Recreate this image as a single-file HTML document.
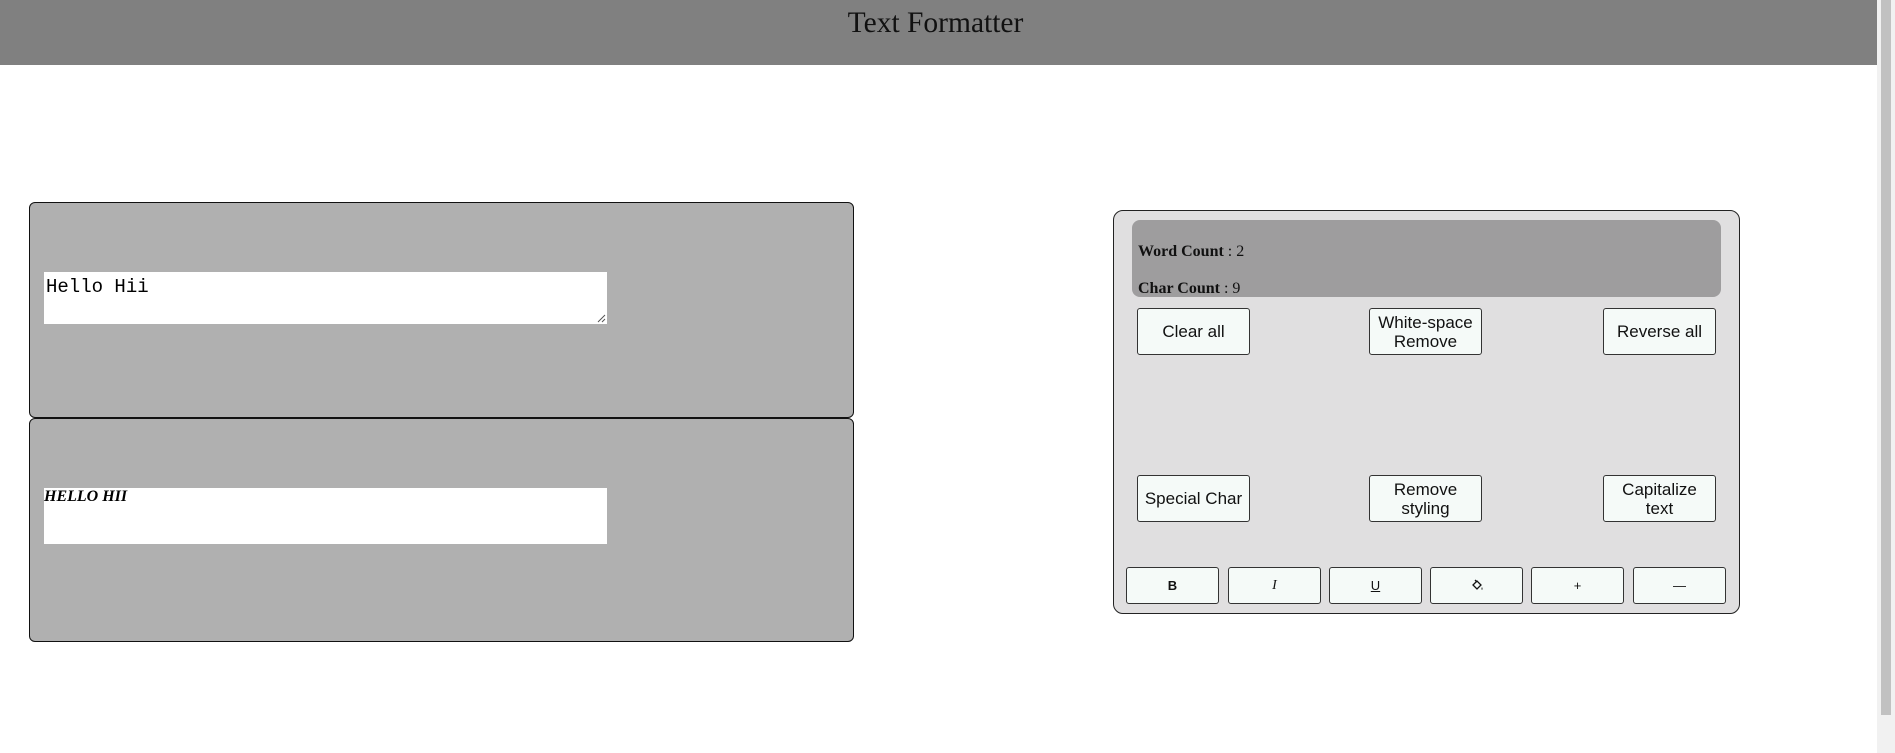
<!DOCTYPE html>
<html><head><meta charset="utf-8"><style>
*{box-sizing:border-box;margin:0;padding:0}
body{width:1895px;height:753px;background:#fff;position:relative;overflow:hidden;font-family:"Liberation Serif",serif}
.hdr{position:absolute;left:0;top:0;width:1877px;height:65px;background:#808080}
.hdr h1{position:absolute;left:0;right:6px;top:7px;text-align:center;font-weight:normal;font-size:29.5px;color:#111}
.sb{position:absolute;left:1877px;top:0;width:18px;height:753px;background:#f1f1f1}
.sb i{position:absolute;left:4px;top:0;width:10px;height:715px;background:#c1c1c1}
.lp{position:absolute;left:29px;width:825px;background:#b0b0b0;border:1px solid #111;border-radius:6px}
.ta{position:absolute;left:44px;background:#fff;width:563px}
.rp{position:absolute;left:1113px;top:210px;width:627px;height:404px;background:#e0dfe0;border:1px solid #222;border-radius:10px}
.cnt{position:absolute;left:18px;top:9px;width:589px;height:77px;background:#9e9d9e;border-radius:8px;font-size:16px;color:#111}
.cnt p{position:absolute;left:6px}
.b{position:absolute;width:113px;height:47px;background:#f5faf8;border:1px solid #333;border-radius:3px;font-family:"Liberation Sans",sans-serif;font-size:17px;color:#111;display:flex;align-items:center;justify-content:center;text-align:center;line-height:19px}
.s{position:absolute;top:356px;width:93px;height:37px;background:#f5faf8;border:1px solid #333;border-radius:3px;font-family:"Liberation Sans",sans-serif;font-size:13px;display:flex;align-items:center;justify-content:center;color:#111}
</style></head><body>
<div class="hdr"><h1>Text Formatter</h1></div>
<div class="sb"><i></i></div>
<div class="lp" style="top:202px;height:216px"></div>
<div class="lp" style="top:418px;height:224px"></div>
<div class="ta" style="top:272px;height:52px;font-family:'Liberation Mono',monospace;font-size:19px;padding:4px 2px">Hello Hii
<svg style="position:absolute;right:1px;bottom:1px" width="10" height="10"><path d="M9 2L2 9M9 6L6 9" stroke="#555" stroke-width="1"/></svg></div>
<div class="ta" style="top:488px;height:56px;font-size:16px;font-weight:bold;font-style:italic;padding-top:0">HELLO HII</div>
<div class="rp">
<div class="cnt"><p style="top:23px"><b>Word Count</b> : 2</p><p style="top:60px"><b>Char Count</b> : 9</p></div>
<div class="b" style="left:23px;top:97px">Clear all</div>
<div class="b" style="left:255px;top:97px">White-space<br>Remove</div>
<div class="b" style="left:489px;top:97px">Reverse all</div>
<div class="b" style="left:23px;top:264px">Special Char</div>
<div class="b" style="left:255px;top:264px">Remove<br>styling</div>
<div class="b" style="left:489px;top:264px">Capitalize<br>text</div>
<div class="s" style="left:12px"><b>B</b></div>
<div class="s" style="left:114px"><i style="font-family:'Liberation Serif',serif;font-size:14px">I</i></div>
<div class="s" style="left:215px"><u>U</u></div>
<div class="s" style="left:316px"><svg width="14" height="14" viewBox="0 0 14 14"><path d="M3 6L7 2L11 6L7 10Z" fill="none" stroke="#111" stroke-width="1.3"/><path d="M5 1L7 3" stroke="#111" stroke-width="1.3"/><path d="M12 8q1 2 0 3q-1-1 0-3" fill="#111"/></svg></div>
<div class="s" style="left:417px">+</div>
<div class="s" style="left:519px">—</div>
</div>
</body></html>
